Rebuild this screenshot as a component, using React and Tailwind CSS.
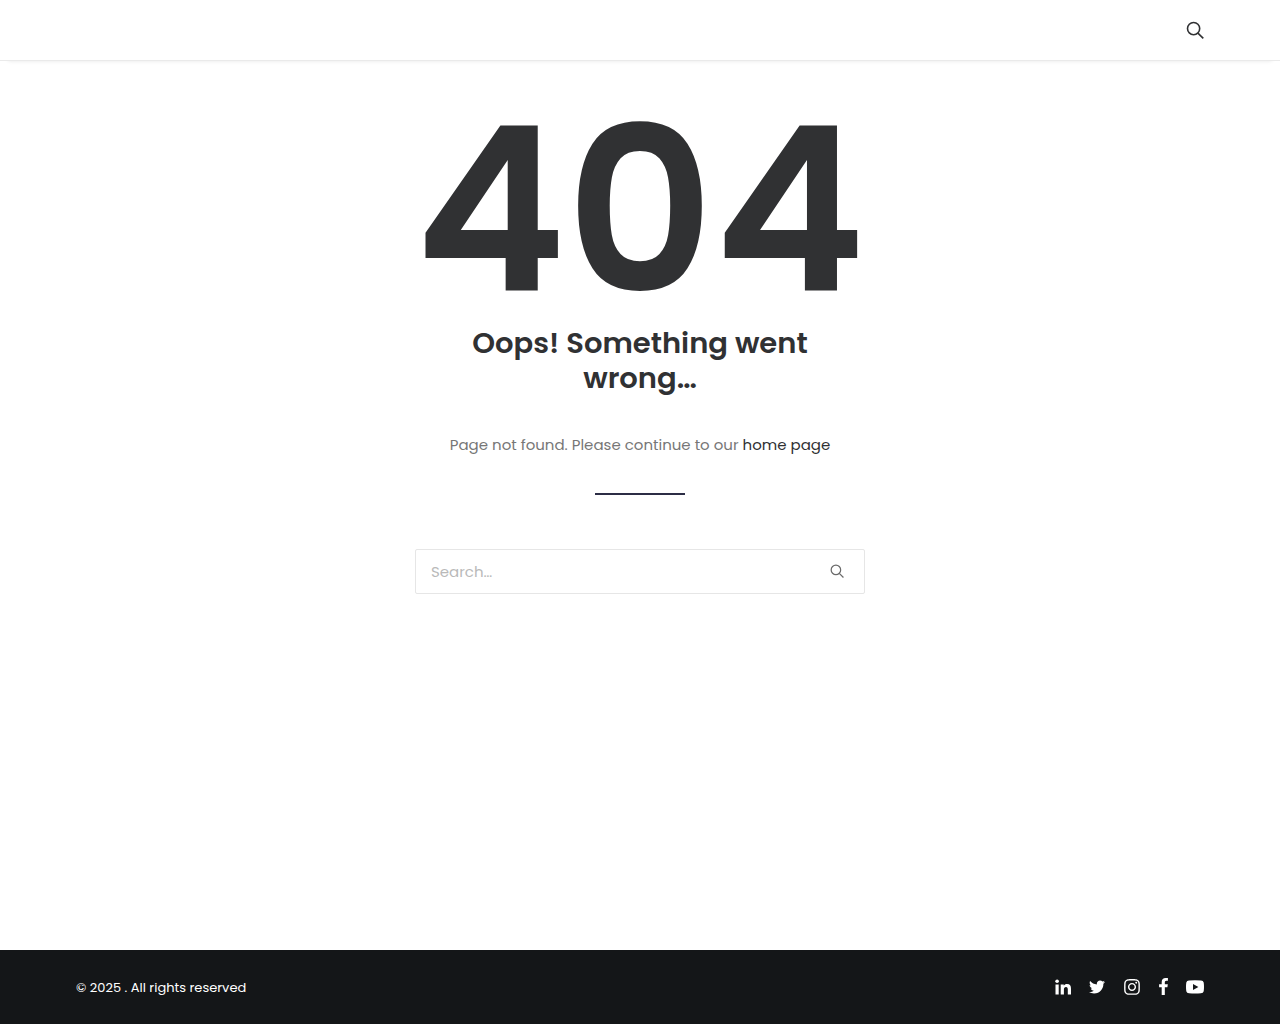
import React, { useState } from "react";
import { FaTwitter, FaInstagram } from "react-icons/fa";

const SearchIcon = ({ className, strokeWidth }) => (
  <svg
    className={className}
    viewBox="0 0 18 18"
    fill="none"
    stroke="currentColor"
    strokeWidth={strokeWidth}
    aria-hidden="true"
  >
    <circle cx="7.6" cy="7.6" r="6.1" />
    <path d="M11.9 12.1 17.3 17.4" />
  </svg>
);

const LinkedinIcon = ({ className }) => (
  <svg className={className} viewBox="0 0 16 16" fill="currentColor" aria-hidden="true">
    <circle cx="2.100" cy="2.300" r="1.800" />
    <path d="M.5 5.400H3.700V15.500H.5ZM5.700 5.400H8.800V6.800C9.400 5.800 10.500 5.100 12 5.100C15 5.100 16 7 16 9.900V15.500H12.800V10.500C12.800 8.900 12.400 7.900 11 7.900C9.600 7.900 8.900 8.900 8.900 10.500V15.500H5.700Z" />
  </svg>
);

const FacebookIcon = ({ className }) => (
  <svg className={className} viewBox="95 128 864 1664" fill="currentColor" aria-hidden="true">
    <path d="M959 140v264h-157q-86 0-116 36t-30 108v189h293l-39 296h-254v759h-306v-759h-255v-296h255v-218q0-186 104-288.500t277-102.500q147 0 228 12z" />
  </svg>
);

const YoutubeIcon = ({ className }) => (
  <svg className={className} viewBox="0 0 18 18" fill="currentColor" aria-hidden="true">
    <path
      fillRule="evenodd"
      d="M3 2.6Q9 2 15 2.6Q17.3 2.8 17.7 4.6Q18.3 9 17.7 13.2Q17.3 15 15 15.2Q9 15.8 3 15.2Q.7 15 .3 13.2Q-.3 9 .3 4.6Q.7 2.8 3 2.6ZM7 6V11.9L12.400 8.950Z"
    />
  </svg>
);

const socials = [
  { name: "LinkedIn", Icon: LinkedinIcon, size: "w-4 h-4" },
  { name: "Twitter", Icon: FaTwitter, size: "w-4 h-4" },
  { name: "Instagram", Icon: FaInstagram, size: "w-[18px] h-[18px]" },
  { name: "Facebook", Icon: FacebookIcon, size: "w-[9px] h-[17px]" },
  { name: "YouTube", Icon: YoutubeIcon, size: "w-[18px] h-[18px]" },
];

function App() {
  const [query, setQuery] = useState("");

  return (
    <div className="min-h-screen flex flex-col bg-white font-['Poppins','Inter',sans-serif] text-[#303133]">
      {/* Header */}
      <header className="h-[61px] shrink-0 flex items-center justify-end px-[76px] border-b border-[#eaeaea] shadow-[0_8px_4px_-8px_rgba(0,0,0,0.1)]">
        <button type="button" aria-label="Open search" className="cursor-pointer">
          <SearchIcon className="w-[18px] h-[18px]" strokeWidth="1.6" />
        </button>
      </header>

      {/* Content */}
      <main className="grow flex flex-col items-center px-9 pt-[60px] pb-16 text-center">
        <div className="w-full max-w-[450px] flex flex-col items-center">
          <h1 className="text-[229px] leading-[180px] font-semibold">404</h1>
          <h2 className="mt-[25px] px-8 text-[29px] leading-[35px] font-semibold">
            Oops! Something went wrong…
          </h2>
          <p className="mt-9 text-[15px] leading-[26px] text-[#777777]">
            Page not found. Please continue to our{" "}
            <a href="/" className="text-[#303133]">
              home page
            </a>
          </p>
          <hr className="mt-[35px] w-[90px] border-t-2 border-[#2c2d45]" />

          <form
            role="search"
            onSubmit={(e) => e.preventDefault()}
            className="mt-[54px] w-full h-[45px] flex items-center border border-[#e6e6e6] rounded-xs"
          >
            <input
              type="search"
              aria-label="Search"
              placeholder="Search…"
              value={query}
              onChange={(e) => setQuery(e.target.value)}
              className="grow min-w-0 h-full px-[15px] text-[15px] outline-none placeholder:text-[#b9b9b9]"
            />
            <button type="submit" aria-label="Search" className="mr-5 pb-0.5 text-[#6a6a6a] cursor-pointer">
              <SearchIcon className="w-[14px] h-[14px]" strokeWidth="1.6" />
            </button>
          </form>
        </div>
      </main>

      {/* Footer */}
      <footer className="h-[74px] shrink-0 flex items-center justify-between px-[76px] pt-px bg-[#141618] text-white">
        <p className="text-[13px] leading-5">© 2025 . All rights reserved</p>
        <nav aria-label="Social links" className="flex items-center gap-[18px] pb-0.5">
          {socials.map(({ name, Icon, size }) => (
            <a key={name} href="#" aria-label={name}>
              <Icon className={size} />
            </a>
          ))}
        </nav>
      </footer>
    </div>
  );
}

export default App;
